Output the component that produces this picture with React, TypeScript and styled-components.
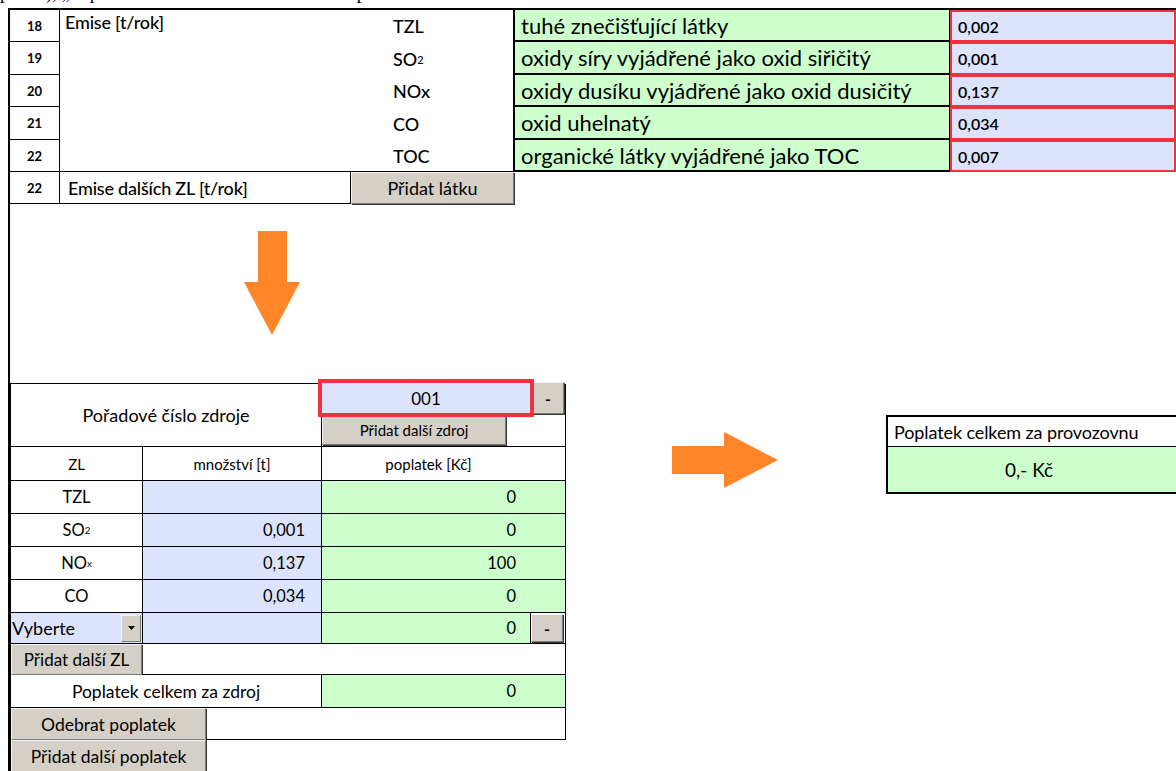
import React from 'react';
import styled, { createGlobalStyle } from 'styled-components';

const C = {
  green: '#ccffcc',
  blue: '#dce3fc',
  gray: '#d4d0c8',
  red: '#f2303e',
  orange: '#ff8628',
  line: '#000000',
};

const GlobalStyle = createGlobalStyle`
  html, body { margin: 0; padding: 0; background: #fff; overflow: hidden; }
  body { font-family: Lato, "Open Sans", sans-serif; color: #000; }
  #root { width: 1176px; height: 771px; overflow: hidden; }
`;

const Page = styled.div`
  width: 1176px;
  height: 771px;
  overflow: hidden;
`;

const TopLine = styled.div`
  height: 8px;
  overflow: hidden;
`;

const TopLineText = styled.p`
  margin: -17px 0 0 0;
  font-family: "Liberation Serif", serif;
  font-size: 19px;
  line-height: 20px;
  white-space: nowrap;
`;

const Sheet = styled.div`
  margin-left: 8px;
  border-left: 2px solid ${C.line};
  border-top: 2px solid ${C.line};
  display: flex;
  flex-direction: column;
`;

/* ---------- top section ---------- */
const TopSection = styled.div`
  display: flex;
  height: 194px;
`;

const LeftTable = styled.div`
  display: grid;
  grid-template-columns: 50px 454px;
  grid-template-rows: 32px 33px 32px 33px 32px 32px;
  width: 504px;
  box-sizing: border-box;
`;

const NumCell = styled.div`
  box-sizing: border-box;
  border-right: 1px solid ${C.line};
  border-bottom: 1px solid ${C.line};
  display: flex;
  align-items: center;
  justify-content: center;
  font-size: 13px;
  font-weight: 700;
`;

const EmiseBlock = styled.div`
  grid-column: 2;
  grid-row: 1 / span 5;
  box-sizing: border-box;
  border-right: 1px solid ${C.line};
  border-bottom: 1px solid ${C.line};
  display: grid;
  grid-template-columns: 323px 1fr;
  grid-template-rows: 32px 33px 32px 33px 31px;
`;

const EmiseLabel = styled.div`
  grid-column: 1;
  grid-row: 1 / -1;
  padding: 1px 0 0 5px;
  font-size: 18px;
  font-weight: 500;
  letter-spacing: -0.2px;
`;

const SubstanceCode = styled.div`
  grid-column: 2;
  display: flex;
  align-items: center;
  padding-left: 10px;
  font-size: 18px;
  font-weight: 500;
`;

const Sub = styled.sub`
  font-size: 0.6em;
  vertical-align: baseline;
  position: relative;
  top: 0.05em;
`;

const LastRowBody = styled.div`
  grid-column: 2;
  display: flex;
`;

const LastLabel = styled.div`
  box-sizing: border-box;
  width: 291px;
  border-right: 1px solid ${C.line};
  border-bottom: 1px solid ${C.line};
  display: flex;
  align-items: center;
  padding-left: 8px;
  font-size: 18px;
  font-weight: 500;
  letter-spacing: -0.2px;
`;

const Button = styled.button<{ $w?: number; $size?: number }>`
  box-sizing: border-box;
  ${(p) => (p.$w ? `width: ${p.$w}px; flex: none;` : 'flex: 1;')}
  margin: 0;
  padding: 0;
  background: ${C.gray};
  border: 1px solid;
  border-color: #f6f4f0 #7a7a7a #7a7a7a #f6f4f0;
  box-shadow: 1px 1px 0 #3a3a3a;
  font-family: inherit;
  font-size: ${(p) => p.$size ?? 17.5}px;
  color: #000;
  display: flex;
  align-items: center;
  justify-content: center;
  white-space: nowrap;
  cursor: default;
`;

const SubstanceGrid = styled.div`
  flex: 1;
  align-self: flex-start;
  display: grid;
  grid-template-columns: 436px 1fr;
  grid-template-rows: 32px 33px 32px 33px 32px;
`;

const NameCell = styled.div`
  box-sizing: border-box;
  background: ${C.green};
  border-left: 1px solid ${C.line};
  border-right: 1px solid ${C.line};
  border-bottom: 2px solid ${C.line};
  display: flex;
  align-items: center;
  padding-left: 6px;
  font-size: 22px;
  white-space: nowrap;
  overflow: hidden;
`;

const ValueCell = styled.div`
  box-sizing: border-box;
  background: ${C.blue};
  border: 2px solid ${C.red};
  display: flex;
  align-items: center;
  padding-left: 6px;
  font-size: 16px;
  font-weight: 600;
`;

/* ---------- arrows ---------- */
const DownArrowArea = styled.div`
  height: 179px;
  box-sizing: border-box;
  padding: 27px 0 0 234px;
`;

const ArrowSvg = styled.svg`
  display: block;
  flex: none;
`;

/* ---------- bottom section ---------- */
const BottomSection = styled.div`
  display: flex;
  align-items: flex-start;
  height: 388px;
`;

const SourceTable = styled.div`
  box-sizing: border-box;
  width: 555px;
  flex: none;
  display: grid;
  grid-template-columns: 132px 179px 209px 35px;
  grid-template-rows: 63px 34px 33px 33px 33px 33px 31px 31px 33px 32px 32px;
  border-top: 1px solid ${C.line};
  border-left: 1px solid ${C.line};
`;

const Cell = styled.div<{
  $bg?: string;
  $align?: 'left' | 'center' | 'right';
  $span?: string;
  $pr?: number;
  $size?: number;
}>`
  box-sizing: border-box;
  ${(p) => (p.$span ? `grid-column: ${p.$span};` : '')}
  background: ${(p) => p.$bg ?? '#fff'};
  border-right: 1px solid ${C.line};
  border-bottom: 1px solid ${C.line};
  display: flex;
  align-items: center;
  justify-content: ${(p) =>
    p.$align === 'right' ? 'flex-end' : p.$align === 'left' ? 'flex-start' : 'center'};
  padding-right: ${(p) => p.$pr ?? 0}px;
  font-size: ${(p) => p.$size ?? 16.5}px;
  white-space: nowrap;
`;

const NumberArea = styled.div`
  grid-column: 3 / 5;
  box-sizing: border-box;
  border-right: 1px solid ${C.line};
  border-bottom: 1px solid ${C.line};
  display: flex;
  flex-direction: column;
`;

const NumberRow = styled.div`
  display: flex;
  height: 31px;
  align-items: flex-start;
`;

const NumberInput = styled.div`
  box-sizing: border-box;
  width: 216px;
  height: 38px;
  margin: -5px 0 0 -4px;
  background: ${C.blue};
  border: 4px solid ${C.red};
  display: flex;
  align-items: center;
  justify-content: center;
  font-size: 17px;
  position: relative;
  z-index: 1;
`;

const SmallButton = styled(Button)`
  height: 32px;
  font-size: 16px;
  font-weight: 700;
`;

const MinusTop = styled(SmallButton)`
  margin: -2px 0 0 -2px;
`;

const AddSourceRow = styled.div`
  display: flex;
  height: 31px;
  align-items: flex-start;
`;

const AddSource = styled(Button)`
  height: 30px;
`;

const SelectCell = styled.div`
  box-sizing: border-box;
  background: ${C.blue};
  border-right: 1px solid ${C.line};
  border-bottom: 1px solid ${C.line};
  display: flex;
  align-items: center;
  padding: 0 1px 0 1px;
  font-size: 18px;
`;

const SelectText = styled.span`
  flex: 1;
`;

const DropButton = styled(Button)`
  height: 27px;
  box-shadow: none;
`;

const MinusCell = styled.div`
  box-sizing: border-box;
  border-right: 1px solid ${C.line};
  border-bottom: 1px solid ${C.line};
  display: flex;
  align-items: center;
  justify-content: center;
  padding-right: 2px;
`;

const MinusRow = styled(SmallButton)`
  height: 28px;
`;

const ButtonRow = styled.div`
  grid-column: 1 / -1;
  display: flex;
`;

const Filler = styled.div<{ $bordered?: boolean }>`
  flex: 1;
  box-sizing: border-box;
  ${(p) =>
    p.$bordered
      ? `border-right: 1px solid ${C.line}; border-bottom: 1px solid ${C.line};`
      : ''}
`;

const RightArrowWrap = styled.div`
  margin: 49px 0 0 107px;
`;

const TotalBox = styled.div`
  box-sizing: border-box;
  margin: 32px 0 0 108px;
  width: 300px;
  flex: none;
  border: 2px solid ${C.line};
`;

const TotalHeader = styled.div`
  height: 29px;
  border-bottom: 1px solid ${C.line};
  display: flex;
  align-items: center;
  padding-left: 6px;
  font-size: 18px;
  letter-spacing: -0.1px;
`;

const TotalValue = styled.div`
  height: 45px;
  background: ${C.green};
  display: flex;
  align-items: center;
  justify-content: center;
  padding-right: 14px;
  font-size: 19px;
`;

const substances = [
  { num: '18', code: <>TZL</>, name: 'tuhé znečišťující látky', value: '0,002' },
  { num: '19', code: <>SO<Sub>2</Sub></>, name: 'oxidy síry vyjádřené jako oxid siřičitý', value: '0,001' },
  { num: '20', code: <>NOx</>, name: 'oxidy dusíku vyjádřené jako oxid dusičitý', value: '0,137' },
  { num: '21', code: <>CO</>, name: 'oxid uhelnatý', value: '0,034' },
  { num: '22', code: <>TOC</>, name: 'organické látky vyjádřené jako TOC', value: '0,007' },
];

const feeRows = [
  { zl: <>TZL</>, amount: '', fee: '0' },
  { zl: <>SO<Sub>2</Sub></>, amount: '0,001', fee: '0' },
  { zl: <>NO<Sub>x</Sub></>, amount: '0,137', fee: '100' },
  { zl: <>CO</>, amount: '0,034', fee: '0' },
];

export default function App() {
  return (
    <Page>
      <GlobalStyle />
      <TopLine>
        <TopLineText>pole a), „to pak klikněte na tlačítko a následně potvrďte</TopLineText>
      </TopLine>
      <Sheet>
        <TopSection>
          <LeftTable>
            {substances.map((s) => (
              <NumCell key={s.num + s.value}>{s.num}</NumCell>
            ))}
            <EmiseBlock>
              <EmiseLabel>Emise [t/rok]</EmiseLabel>
              {substances.map((s) => (
                <SubstanceCode key={s.value}>{s.code}</SubstanceCode>
              ))}
            </EmiseBlock>
            <NumCell>22</NumCell>
            <LastRowBody>
              <LastLabel>Emise dalších ZL [t/rok]</LastLabel>
              <Button $size={18}>Přidat látku</Button>
            </LastRowBody>
          </LeftTable>
          <SubstanceGrid>
            {substances.map((s) => (
              <React.Fragment key={s.value}>
                <NameCell>{s.name}</NameCell>
                <ValueCell>{s.value}</ValueCell>
              </React.Fragment>
            ))}
          </SubstanceGrid>
        </TopSection>

        <DownArrowArea>
          <ArrowSvg width="56" height="104" viewBox="0 0 56 104">
            <polygon points="14,0 43,0 43,51 56,51 28,104 0,51 14,51" fill={C.orange} />
          </ArrowSvg>
        </DownArrowArea>

        <BottomSection>
          <SourceTable>
            <Cell $span="1 / 3" $size={18}>Pořadové číslo zdroje</Cell>
            <NumberArea>
              <NumberRow>
                <NumberInput>001</NumberInput>
                <MinusTop $w={32}>-</MinusTop>
              </NumberRow>
              <AddSourceRow>
                <AddSource $w={184} $size={15}>Přidat další zdroj</AddSource>
              </AddSourceRow>
            </NumberArea>

            <Cell $size={15}>ZL</Cell>
            <Cell $size={15}>množství [t]</Cell>
            <Cell $span="3 / 5" $pr={30} $size={15}>poplatek [Kč]</Cell>

            {feeRows.map((r, i) => (
              <React.Fragment key={i}>
                <Cell>{r.zl}</Cell>
                <Cell $bg={C.blue} $align="right" $pr={16}>{r.amount}</Cell>
                <Cell $bg={C.green} $align="right" $span="3 / 5" $pr={49}>{r.fee}</Cell>
              </React.Fragment>
            ))}

            <SelectCell>
              <SelectText>Vyberte</SelectText>
              <DropButton $w={20}>
                <svg width="7" height="4" viewBox="0 0 7 4">
                  <polygon points="0,0 7,0 3.5,4" fill="#000" />
                </svg>
              </DropButton>
            </SelectCell>
            <Cell $bg={C.blue} />
            <Cell $bg={C.green} $align="right" $pr={14}>0</Cell>
            <MinusCell>
              <MinusRow $w={32}>-</MinusRow>
            </MinusCell>

            <ButtonRow>
              <Button $w={131} $size={17}>Přidat další ZL</Button>
              <Filler $bordered />
            </ButtonRow>

            <Cell $span="1 / 3" $size={17.5}>Poplatek celkem za zdroj</Cell>
            <Cell $bg={C.green} $align="right" $span="3 / 5" $pr={49}>0</Cell>

            <ButtonRow>
              <Button $w={195}>Odebrat poplatek</Button>
              <Filler $bordered />
            </ButtonRow>

            <ButtonRow>
              <Button $w={195}>Přidat další poplatek</Button>
              <Filler />
            </ButtonRow>
          </SourceTable>

          <RightArrowWrap>
            <ArrowSvg width="106" height="56" viewBox="0 0 106 56">
              <polygon points="0,14 52,14 52,0 106,28 52,56 52,42 0,42" fill={C.orange} />
            </ArrowSvg>
          </RightArrowWrap>

          <TotalBox>
            <TotalHeader>Poplatek celkem za provozovnu</TotalHeader>
            <TotalValue>0,- Kč</TotalValue>
          </TotalBox>
        </BottomSection>
      </Sheet>
    </Page>
  );
}
